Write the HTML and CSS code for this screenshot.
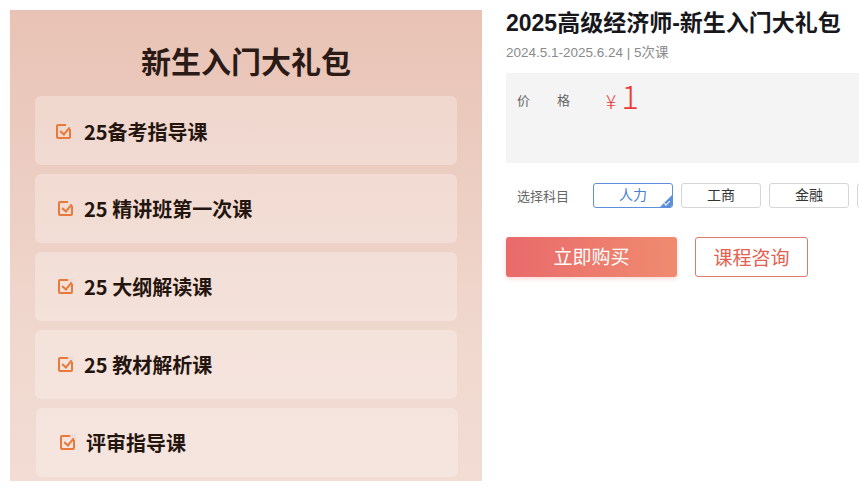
FILE: index.html
```html
<!DOCTYPE html>
<html>

<head>
    <meta charset="utf-8">
    <title>2025高级经济师-新生入门大礼包</title>
    <link rel="stylesheet" href="styles.css">
</head>

<body>
    <div class="page">
        <!-- 左侧海报 -->
        <div class="poster">
            <h2 class="poster-title">新生入门大礼包</h2>
            <ul class="poster-list">
                <li><span class="check"></span>25备考指导课</li>
                <li><span class="check"></span>25 精讲班第一次课</li>
                <li><span class="check"></span>25 大纲解读课</li>
                <li><span class="check"></span>25 教材解析课</li>
                <li class="last"><span class="check"></span>评审指导课</li>
            </ul>
        </div>
        <!-- 右侧信息 -->
        <div class="info">
            <h1 class="info-title">2025高级经济师-新生入门大礼包</h1>
            <p class="info-sub">2024.5.1-2025.6.24 | 5次课</p>
            <div class="price-box">
                <span class="price-label">价<i></i>格</span>
                <span class="price"><em>¥</em>1</span>
            </div>
            <div class="subject">
                <span class="subject-label">选择科目</span>
                <ul class="subject-list">
                    <li class="active">人力</li>
                    <li>工商</li>
                    <li>金融</li>
                    <li></li>
                </ul>
            </div>
            <div class="btns">
                <a class="btn-buy">立即购买</a>
                <a class="btn-ask">课程咨询</a>
            </div>
        </div>
    </div>
</body>

</html>
```

FILE: styles.css
```css
* {
    box-sizing: border-box;
}

body {
    margin: 0;
    overflow: hidden;
    font-family: "Liberation Sans", "Noto Sans CJK SC", sans-serif;
    background-color: #fff;
}

ul {
    margin: 0;
    padding: 0;
    list-style: none;
}

.page {
    display: flex;
    align-items: flex-start;
    gap: 24px;
    padding: 10px 0 0 10px;
    width: 1000px;
}

/* 海报 */
.poster {
    width: 472px;
    height: 471px;
    flex-shrink: 0;
    padding: 30px 25px 0 25px;
    background: linear-gradient(180deg, #e8c3b5 0%, #eccdc1 35%, #f0d8ce 70%, #f2dcd3 100%);
}

.poster-title {
    margin: 0 0 16px 0;
    text-align: center;
    font-size: 30px;
    line-height: 40px;
    font-weight: 700;
    color: #2b1a16;
    font-family: "Noto Sans CJK SC", sans-serif;
}

.poster-list>li {
    display: flex;
    align-items: center;
    height: 69px;
    margin-bottom: 9px;
    padding: 2px 0 0 21px;
    border-radius: 6px;
    background-color: rgba(255, 255, 255, 0.28);
    font-family: "Noto Sans CJK SC", sans-serif;
    font-size: 20px;
    font-weight: 700;
    color: #25150f;
}

.poster-list>li:nth-child(n+2) {
    padding-top: 0;
    padding-left: 23px;
}

.poster-list>li.last {
    margin-left: 1px;
    margin-right: -1px;
    padding-left: 24px;
}

.check {
    position: relative;
    width: 15px;
    height: 15px;
    margin-right: 13px;
    border: 2px solid #e9793a;
    border-radius: 2px;
}

.poster-list>li:nth-child(n+2) .check {
    margin-right: 11px;
}

.check::before {
    content: "";
    position: absolute;
    top: -3px;
    right: -3px;
    width: 6px;
    height: 6px;
    background-color: #f1dcd3;
}

.check::after {
    content: "";
    position: absolute;
    left: 2px;
    top: 1px;
    width: 8px;
    height: 4px;
    border-left: 2px solid #e9793a;
    border-bottom: 2px solid #e9793a;
    transform: rotate(-50deg);
}

/* 右侧 */
.info {
    width: 440px;
    flex-shrink: 0;
}

.info-title {
    margin: -2px 0 0 0;
    font-size: 23px;
    line-height: 30px;
    font-weight: 700;
    color: #17171c;
}

.info-sub {
    margin: 6px 0 0 0;
    font-size: 13.5px;
    line-height: 18px;
    color: #8a8a8a;
}

.price-box {
    display: flex;
    align-items: flex-start;
    height: 90px;
    margin-top: 11px;
    padding: 4px 0 0 11px;
    background-color: #f4f4f4;
}

.price-label {
    display: flex;
    margin-top: 15px;
    width: 89px;
    font-size: 13px;
    line-height: 18px;
    color: #666;
}

.price-label i {
    width: 27px;
}

.price {
    font-family: "Noto Sans CJK SC", sans-serif;
    font-weight: 300;
    font-size: 33px;
    line-height: 36px;
    color: #ea3b36;
}

.price em {
    font-style: normal;
    font-size: 19px;
    margin-right: 5px;
}

.subject {
    display: flex;
    align-items: center;
    margin-top: 20px;
}

.subject-label {
    width: 87px;
    padding-left: 11px;
    font-size: 13px;
    color: #666;
}

.subject-list {
    display: flex;
    gap: 8px;
}

.subject-list>li {
    position: relative;
    width: 80px;
    height: 25px;
    line-height: 23px;
    text-align: center;
    border: 1px solid #d6d6d6;
    border-radius: 3px;
    font-size: 14px;
    color: #333;
    overflow: hidden;
}

.subject-list>li.active {
    border-color: #5e8fdc;
    color: #4b7fd2;
}

.subject-list>li.active::before {
    content: "";
    position: absolute;
    right: 0;
    bottom: 0;
    border-left: 12px solid transparent;
    border-bottom: 12px solid #5e8fdc;
}

.subject-list>li.active::after {
    content: "";
    position: absolute;
    right: 2px;
    bottom: 3px;
    width: 5px;
    height: 2px;
    border-left: 1px solid #fff;
    border-bottom: 1px solid #fff;
    transform: rotate(-45deg);
}

.btns {
    display: flex;
    gap: 18px;
    margin-top: 29px;
}

.btns a {
    height: 40px;
    line-height: 38px;
    text-align: center;
    border-radius: 3px;
    font-size: 19px;
    font-family: "Noto Sans CJK SC", sans-serif;
}

.btn-buy {
    width: 171px;
    color: #fff;
    background: linear-gradient(90deg, #e96a6c, #f08b6f);
    box-shadow: 0 2px 4px rgba(230, 110, 100, 0.25);
}

.btn-ask {
    width: 113px;
    color: #e4604f;
    border: 1px solid #e0796c;
    background-color: #fff;
}
```
